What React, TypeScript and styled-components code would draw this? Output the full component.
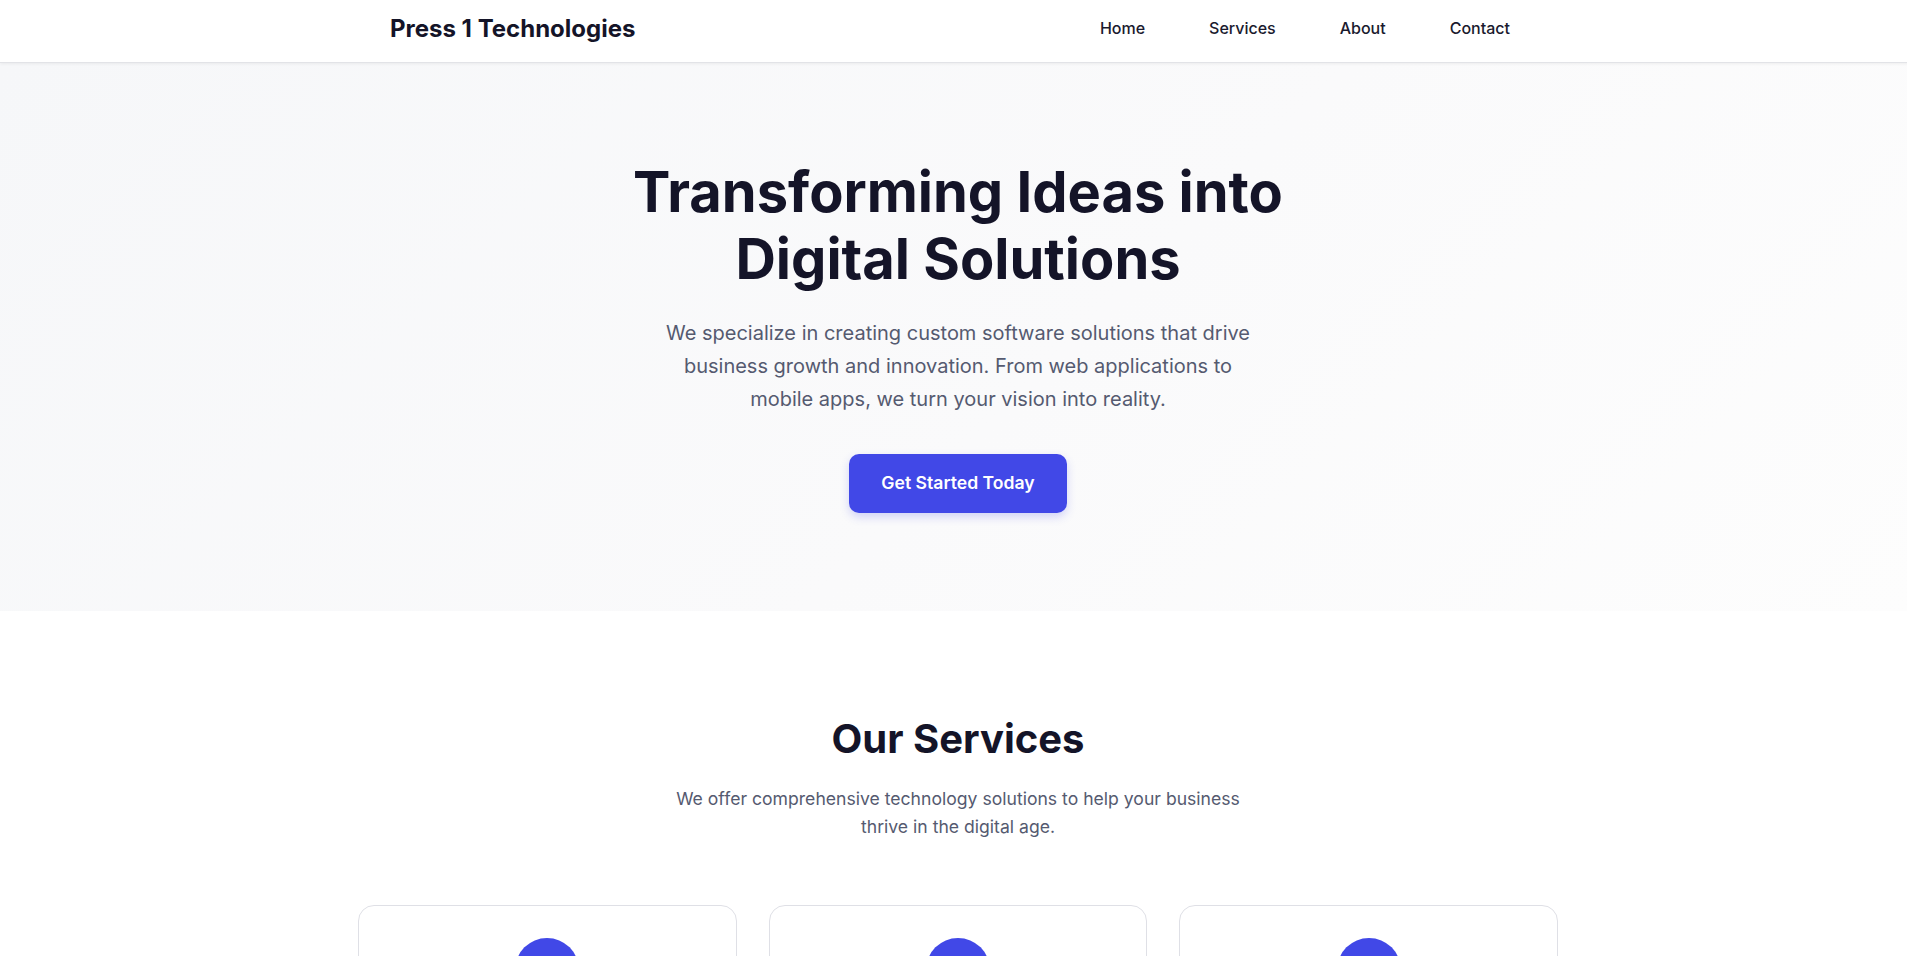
import React from "react";
import styled, { createGlobalStyle } from "styled-components";

const GlobalStyle = createGlobalStyle`
  *, *::before, *::after { box-sizing: border-box; }
  html, body { margin: 0; padding: 0; overflow-x: hidden; }
  body {
    font-family: Inter, "Noto Sans", "Liberation Sans", sans-serif;
    color: #111827;
    background: #ffffff;
    line-height: 1.6;
    -webkit-font-smoothing: antialiased;
  }
  #root { min-width: 1916px; }
`;

const Header = styled.header`
  background: #ffffff;
  border-bottom: 1px solid #e2e3e7;
  box-shadow: 0 1px 3px rgba(0, 0, 0, 0.06);
  position: relative;
  z-index: 2;
`;

const Container = styled.div`
  max-width: 1200px;
  margin: 0 auto;
  padding: 0 2rem;
`;

const NavBar = styled(Container)`
  height: 62px;
  padding-bottom: 7px;
  display: flex;
  align-items: center;
  justify-content: space-between;
`;

const Logo = styled.div`
  font-size: 24px;
  font-weight: 700;
  color: #141428;
  line-height: 1;
  padding-top: 2px;
`;

const NavList = styled.nav`
  display: flex;
  gap: 2rem;
`;

const NavLink = styled.a`
  font-size: 16px;
  font-weight: 500;
  color: #1a1a2e;
  text-decoration: none;
  padding: 0.5rem 1rem;
  line-height: 1.5;
`;

const Hero = styled.section`
  background: linear-gradient(135deg, #f6f7f9 0%, #fafafb 55%, #fdfdfd 100%);
  padding: 96px 2rem 98px;
  display: flex;
  flex-direction: column;
  align-items: center;
  text-align: center;
`;

const HeroTitle = styled.h1`
  margin: 0;
  font-size: 56px;
  font-weight: 700;
  line-height: 1.2;
  color: #141428;
  max-width: 700px;
`;

const HeroText = styled.p`
  margin: 24px 0 0;
  max-width: 600px;
  font-size: 20px;
  line-height: 1.65;
  color: #555a70;
`;

const PrimaryButton = styled.a`
  margin-top: 38px;
  display: inline-block;
  background: #4148e7;
  color: #ffffff;
  font-size: 17.6px;
  font-weight: 600;
  line-height: 1.6;
  padding: 15px 32px;
  border-radius: 10px;
  text-decoration: none;
  box-shadow: 0 4px 10px rgba(65, 72, 231, 0.22);
`;

const Services = styled.section`
  padding: 104px 0 96px;
`;

const SectionHeader = styled.div`
  display: flex;
  flex-direction: column;
  align-items: center;
  text-align: center;
`;

const SectionTitle = styled.h2`
  margin: 0;
  font-size: 40px;
  font-weight: 700;
  line-height: 1.2;
  color: #141428;
`;

const SectionText = styled.p`
  margin: 22px 0 0;
  max-width: 600px;
  font-size: 17.6px;
  line-height: 1.6;
  color: #555a70;
`;

const CardGrid = styled.div`
  max-width: 1200px;
  margin: 64px auto 0;
  display: grid;
  grid-template-columns: repeat(3, 1fr);
  gap: 2rem;
`;

const Card = styled.div`
  background: #ffffff;
  border: 1px solid #dfe0e6;
  border-radius: 16px;
  padding: 32px;
  display: flex;
  flex-direction: column;
  align-items: center;
  text-align: center;
`;

const IconCircle = styled.div`
  width: 64px;
  height: 64px;
  border-radius: 50%;
  background: #4148e7;
  display: flex;
  align-items: center;
  justify-content: center;
  color: #ffffff;
`;

const CardTitle = styled.h3`
  margin: 24px 0 12px;
  font-size: 22px;
  font-weight: 600;
  color: #141428;
`;

const CardText = styled.p`
  margin: 0;
  font-size: 16px;
  color: #555a70;
`;

const services = [
  {
    title: "Web Development",
    text: "Custom web applications built with modern technologies for performance and scalability.",
    icon: (
      <svg width="28" height="28" viewBox="0 0 24 24" fill="none" stroke="currentColor" strokeWidth="2" strokeLinecap="round" strokeLinejoin="round">
        <polyline points="16 18 22 12 16 6" />
        <polyline points="8 6 2 12 8 18" />
      </svg>
    ),
  },
  {
    title: "Mobile Apps",
    text: "Native and cross-platform mobile applications that engage your users anywhere.",
    icon: (
      <svg width="28" height="28" viewBox="0 0 24 24" fill="none" stroke="currentColor" strokeWidth="2" strokeLinecap="round" strokeLinejoin="round">
        <rect x="6" y="2" width="12" height="20" rx="2" />
        <line x1="12" y1="18" x2="12.01" y2="18" />
      </svg>
    ),
  },
  {
    title: "Cloud Solutions",
    text: "Reliable cloud infrastructure and migration services to keep your business running.",
    icon: (
      <svg width="28" height="28" viewBox="0 0 24 24" fill="none" stroke="currentColor" strokeWidth="2" strokeLinecap="round" strokeLinejoin="round">
        <path d="M17.5 19H9a7 7 0 1 1 6.71-9h1.79a4.5 4.5 0 1 1 0 9Z" />
      </svg>
    ),
  },
];

export default function App() {
  return (
    <>
      <GlobalStyle />
      <Header>
        <NavBar>
          <Logo>Press 1 Technologies</Logo>
          <NavList>
            <NavLink href="#home">Home</NavLink>
            <NavLink href="#services">Services</NavLink>
            <NavLink href="#about">About</NavLink>
            <NavLink href="#contact">Contact</NavLink>
          </NavList>
        </NavBar>
      </Header>
      <Hero id="home">
        <HeroTitle>Transforming Ideas into Digital Solutions</HeroTitle>
        <HeroText>
          We specialize in creating custom software solutions that drive business growth and
          innovation. From web applications to mobile apps, we turn your vision into reality.
        </HeroText>
        <PrimaryButton href="#contact">Get Started Today</PrimaryButton>
      </Hero>
      <Services id="services">
        <Container>
          <SectionHeader>
            <SectionTitle>Our Services</SectionTitle>
            <SectionText>
              We offer comprehensive technology solutions to help your business thrive in the
              digital age.
            </SectionText>
          </SectionHeader>
        </Container>
        <CardGrid>
          {services.map((s) => (
            <Card key={s.title}>
              <IconCircle>{s.icon}</IconCircle>
              <CardTitle>{s.title}</CardTitle>
              <CardText>{s.text}</CardText>
            </Card>
          ))}
        </CardGrid>
      </Services>
    </>
  );
}
